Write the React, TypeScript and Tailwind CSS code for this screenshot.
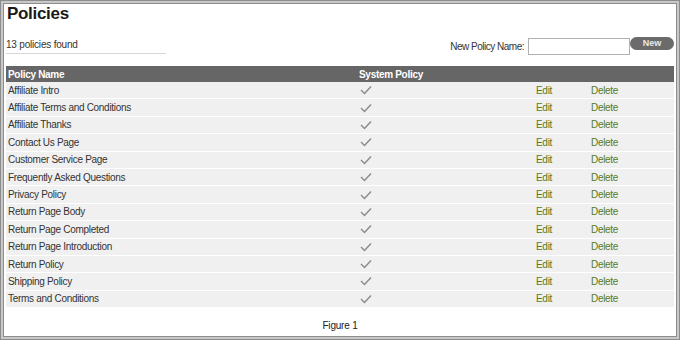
const policies = [
  "Affiliate Intro",
  "Affiliate Terms and Conditions",
  "Affiliate Thanks",
  "Contact Us Page",
  "Customer Service Page",
  "Frequently Asked Questions",
  "Privacy Policy",
  "Return Page Body",
  "Return Page Completed",
  "Return Page Introduction",
  "Return Policy",
  "Shipping Policy",
  "Terms and Conditions",
];

function Check() {
  return (
    <svg width="12" height="10" viewBox="0 0 12 10" className="block">
      <path d="M1 5 L4.5 8.5 L11 1.5" fill="none" stroke="#8a8a8a" strokeWidth="1.4" />
    </svg>
  );
}

export default function App() {
  return (
    <div className="w-[680px] h-[340px] bg-[#c8c8c8] border border-[#8c8c8c] p-[2px] font-['Liberation_Sans',Arial,sans-serif] text-[#333]">
      <div className="h-full bg-white border border-[#8c8c8c] pl-[2px] pr-[2px] flex flex-col">
        <h1 className="text-[17px] font-bold text-[#1a1a1a] leading-none mt-[1px] ml-[1px] tracking-[-0.3px]">Policies</h1>

        <div className="flex items-start justify-between mt-[14px]">
          <div className="w-[160px] border-b border-[#d6d6d6] pb-[2px] text-[10px] leading-[13px] pt-[2px] tracking-[-0.2px]">
            13 policies found
          </div>
          <div className="flex items-start">
            <span className="text-[10px] leading-[13px] mt-[4px] mr-[4px] tracking-[-0.5px]">New Policy Name:</span>
            <input
              type="text"
              className="w-[102px] h-[17px] mt-[2px] border border-[#b0b0b0] bg-white"
            />
            <button className="w-[44px] h-[13px] mt-[1px] rounded-full bg-[#6b6b6b] text-[9px] leading-[13px] text-[#e8e8e8] font-bold">
              New
            </button>
          </div>
        </div>

        <div className="mt-[11px] text-[10px] tracking-[-0.3px]">
          <div className="flex h-[16px] items-center bg-[#666] text-white font-bold">
            <div className="w-[353px] pl-[2px]">Policy Name</div>
            <div>System Policy</div>
          </div>
          {policies.map((p) => (
            <div
              key={p}
              className="flex h-[17.4px] items-center bg-[#f0f0f0] border-b border-white"
            >
              <div className="w-[353px] pl-[2px]">{p}</div>
              <div className="w-[177px] pl-[1px]">
                <Check />
              </div>
              <a className="w-[55px] text-[#587a18]">Edit</a>
              <a className="text-[#587a18]">Delete</a>
            </div>
          ))}
        </div>

        <div className="text-center text-[10px] mt-[10px] text-[#222] tracking-[-0.2px]">Figure 1</div>
      </div>
    </div>
  );
}
